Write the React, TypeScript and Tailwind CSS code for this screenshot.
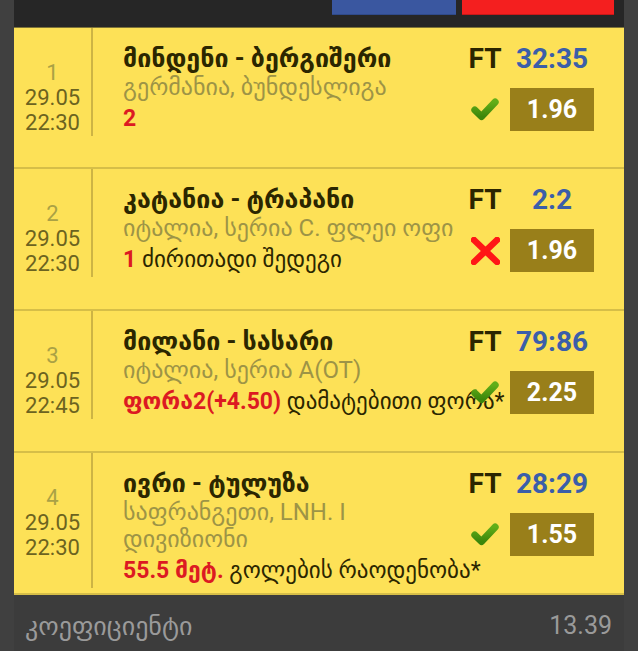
const bets = [
  {
    n: 1,
    date: "29.05",
    time: "22:30",
    title: "მინდენი - ბერგიშერი",
    league: "გერმანია, ბუნდესლიგა",
    pick: "2",
    market: "",
    score: "32:35",
    odds: "1.96",
    won: true,
  },
  {
    n: 2,
    date: "29.05",
    time: "22:30",
    title: "კატანია - ტრაპანი",
    league: "იტალია, სერია C. ფლეი ოფი",
    pick: "1",
    market: "ძირითადი შედეგი",
    score: "2:2",
    odds: "1.96",
    won: false,
  },
  {
    n: 3,
    date: "29.05",
    time: "22:45",
    title: "მილანი - სასარი",
    league: "იტალია, სერია A(OT)",
    pick: "ფორა2(+4.50)",
    market: "დამატებითი ფორა*",
    score: "79:86",
    odds: "2.25",
    won: true,
  },
  {
    n: 4,
    date: "29.05",
    time: "22:30",
    title: "ივრი - ტულუზა",
    league: "საფრანგეთი, LNH. I დივიზიონი",
    pick: "55.5 მეტ.",
    market: "გოლების რაოდენობა*",
    score: "28:29",
    odds: "1.55",
    won: true,
  },
];

function Check({ id }: { id: string }) {
  return (
    <svg width="28" height="24" viewBox="0 0 28 24">
      <defs>
        <linearGradient id={id} x1="0" y1="0" x2="0" y2="1">
          <stop offset="0" stopColor="#62ae18" />
          <stop offset="1" stopColor="#3c860b" />
        </linearGradient>
      </defs>
      <path
        d="M3.8 12 L10.5 18.5 L24.2 4"
        fill="none"
        stroke={`url(#${id})`}
        strokeWidth="7"
        strokeLinecap="round"
        strokeLinejoin="round"
      />
    </svg>
  );
}

function Cross() {
  return (
    <svg width="29" height="28" viewBox="0 0 29 28">
      <path d="M3 3 L26 25 M26 3 L3 25" stroke="#ff1616" strokeWidth="6.5" strokeLinecap="round" />
    </svg>
  );
}

export default function App() {
  return (
    <div
      className="w-[638px] h-[651px] overflow-hidden bg-[#404040] px-[14px]"
      style={{ fontFamily: 'Roboto, "DejaVu Sans", sans-serif' }}
    >
      <div className="flex flex-col h-full">
        {/* top bar */}
        <div className="h-[27px] shrink-0 bg-[#262626] flex justify-end items-start gap-[6px] pr-[10px]">
          <div className="w-[124px] h-[15px] bg-[#3a57a0] border-b border-[#2f4a8a]" />
          <div className="w-[152px] h-[15px] bg-[#f41f1f] border-b border-[#c81818]" />
        </div>

        {bets.map((b, i) => (
          <div
            key={b.n}
            className={
              "relative shrink-0 min-h-[142px] bg-[#fde157] border-b-2 border-[#d6be48] " +
              (i === 0 ? "border-t border-t-[#7d7338]" : "")
            }
          >
            <div className="flex">
              <div className="w-[79px] shrink-0 border-r-2 border-[#cdb444] pt-[32px] text-center text-[22px] leading-[25px]">
                <div className="text-[#aaa145]">{b.n}</div>
                <div className="text-[#6c6320]">{b.date}</div>
                <div className="text-[#6c6320]">{b.time}</div>
              </div>
              <div className="flex-1 min-w-0 pl-[30px] pr-[159px] pt-[16px] pb-[3px]">
                <div className="text-[25px] leading-[30px] font-bold text-[#2b2600] whitespace-nowrap">{b.title}</div>
                <div className="text-[24px] leading-[27px] text-[#9d9446]">{b.league}</div>
                <div className="mt-[4px] text-[23px] leading-[28px] whitespace-nowrap text-[#2b2600]">
                  <span className="font-bold text-[#dc1a22]">{b.pick}</span>
                  {b.market ? " " + b.market : ""}
                </div>
              </div>
            </div>

            <div className="absolute top-[16px] right-[30px] grid grid-cols-[40px_84px] gap-x-[5px]">
              <div className="h-[30px] flex items-center justify-center text-[28px] font-bold text-[#2b2500]">FT</div>
              <div className="h-[30px] flex items-center justify-center text-[28px] font-bold text-[#3b5ea9]">{b.score}</div>
              <div className="mt-[14px] h-[43px] flex items-center justify-center">
                {b.won ? <Check id={"chk" + b.n} /> : <Cross />}
              </div>
              <div className="mt-[14px] h-[43px] bg-[#997f1a] flex items-center justify-center text-[25px] font-bold text-white">
                {b.odds}
              </div>
            </div>
          </div>
        ))}

        <div className="flex-1 bg-[#3c3c3c] flex items-center justify-between pl-[11px] pr-[12px] pt-[6px]">
          <span className="text-[26px] text-[#9a9a9a]">კოეფიციენტი</span>
          <span className="text-[25px] text-[#9a9a9a]">13.39</span>
        </div>
      </div>
    </div>
  );
}
